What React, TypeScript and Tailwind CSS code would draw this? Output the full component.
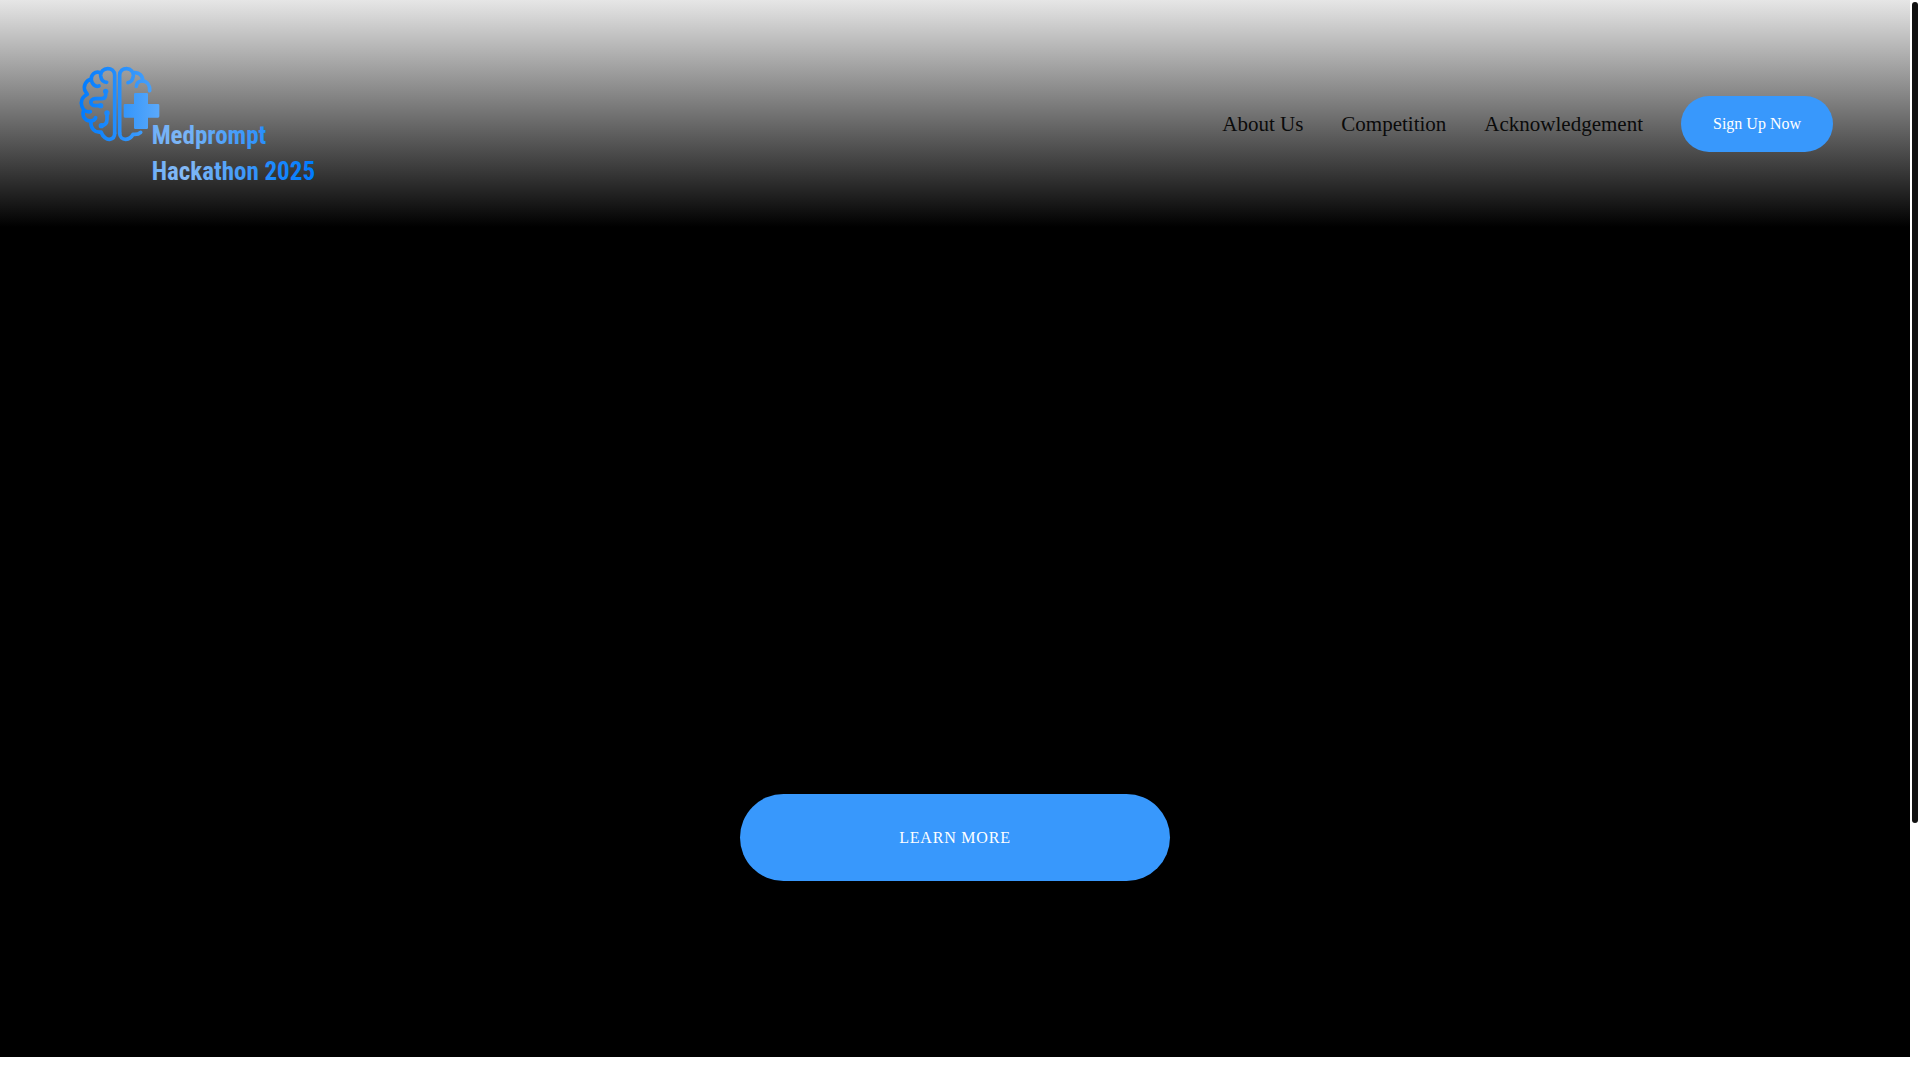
const navLinks = [
  { label: "About Us", href: "#about" },
  { label: "Competition", href: "#competition" },
  { label: "Acknowledgement", href: "#acknowledgement" },
];

function Logo() {
  return (
    <svg
      viewBox="51 33 720 378"
      role="img"
      aria-label="Medprompt Hackathon 2025"
      className="h-[126px] w-60"
    >
      <defs>
        <linearGradient id="brain" gradientUnits="userSpaceOnUse" x1="60" y1="0" x2="290" y2="0">
          <stop offset="0" stopColor="#007bff" />
          <stop offset="0.25" stopColor="#1285fe" />
          <stop offset="1" stopColor="#4aa2fb" />
        </linearGradient>
        <linearGradient id="cross" gradientUnits="userSpaceOnUse" x1="191" y1="0" x2="298" y2="0">
          <stop offset="0" stopColor="#3496fb" />
          <stop offset="1" stopColor="#5ba9fa" />
        </linearGradient>
        <linearGradient id="line1" gradientUnits="userSpaceOnUse" x1="278" y1="0" x2="612" y2="0">
          <stop offset="0" stopColor="#6fb0f8" />
          <stop offset="0.25" stopColor="#7db6f6" />
          <stop offset="1" stopColor="#2a90fc" />
        </linearGradient>
        <linearGradient id="line2" gradientUnits="userSpaceOnUse" x1="278" y1="0" x2="762" y2="0">
          <stop offset="0" stopColor="#6fb0f8" />
          <stop offset="0.2" stopColor="#85baf5" />
          <stop offset="0.75" stopColor="#1c89fd" />
          <stop offset="1" stopColor="#007bff" />
        </linearGradient>
      </defs>
      <g fill="none" stroke="url(#brain)" strokeWidth="11" strokeLinecap="round" strokeLinejoin="round">
        <path d="M164 250V76C164 62 154 56 143 56C130 56 121 66 122 78C124 90 131 97 140 97" />
        <path d="M121 68C105 62 92 75 94 90C96 102 106 112 117 108" />
        <path d="M94 88C78 90 68 108 76 124L82 133C67 139 60 155 66 170C70 181 80 187 91 185" />
        <path d="M71 181C65 197 74 213 91 213C99 213 105 209 107 203" />
        <path d="M93 214C91 235 105 249 123 246C129 262 141 269 149 268C159 267 164 260 164 250" />
        <path d="M137 126V135C137 143 131 146 124 146H106C88 146 88 167 106 167H122" />
        <path d="M141 190V208C141 220 135 226 124 227" />
        <path d="M179 250V76C179 62 189 56 200 56C213 56 221 66 220 78C218 90 211 97 204 98" />
        <path d="M222 68C237 66 249 77 248 93C262 94 270 106 269 122" />
        <path d="M247 93C237 93 230 99 229 109" />
        <path d="M179 250C179 261 187 268 197 268C208 267 215 261 219 253C229 254 237 252 242 247" />
      </g>
      <g fill="url(#brain)">
        <circle cx="137" cy="124" r="8" />
        <circle cx="122" cy="167" r="8" />
        <circle cx="141" cy="189" r="8" />
        <circle cx="124" cy="227" r="8" />
      </g>
      <path
        fill="url(#cross)"
        d="M226 129H260Q264 129 264 133V162H294Q298 162 298 166V199Q298 203 294 203H264V233Q264 237 260 237H226Q222 237 222 233V203H195Q191 203 191 199V166Q191 162 195 162H222V133Q222 129 226 129Z"
      />
      <g
        fontFamily="'Roboto Condensed', Roboto, sans-serif"
        fontWeight="700"
        fontSize="75"
      >
        <text x="275" y="283" fill="url(#line1)">Medprompt</text>
        <text x="275" y="389" fill="url(#line2)">Hackathon 2025</text>
      </g>
    </svg>
  );
}

function Header() {
  return (
    <header className="flex h-[227px] items-start justify-between bg-linear-to-b/srgb from-[#e6e6e6] to-black px-[77px] pt-[61px]">
      <a href="#home">
        <Logo />
      </a>
      <div className="flex h-[126px] items-center gap-[38px]">
        <nav className="flex gap-[38px] text-[21px] leading-8 text-[#0a0a0a]">
          {navLinks.map((link) => (
            <a key={link.href} href={link.href}>
              {link.label}
            </a>
          ))}
        </nav>
        <a
          href="#signup"
          className="rounded-full bg-[#3898fc] px-8 py-4 text-base leading-6 text-white"
        >
          Sign Up Now
        </a>
      </div>
    </header>
  );
}

export default function App() {
  return (
    <div className="flex h-screen overflow-hidden bg-white font-['Liberation_Serif',serif]">
      <div className="flex flex-1 flex-col pb-[23px]">
        <main className="flex flex-1 flex-col bg-black">
          <Header />
          <section className="flex flex-1 items-end justify-center pb-44">
            <a
              href="#learn-more"
              className="w-[430px] rounded-[44px] bg-[#3898fc] py-8 text-center text-base leading-[23px] tracking-wider text-white"
            >
              LEARN MORE
            </a>
          </section>
        </main>
      </div>
      <div className="w-2.5 p-0.5" aria-hidden="true">
        <div className="h-[76.3%] rounded-full bg-[#111111]" />
      </div>
    </div>
  );
}
